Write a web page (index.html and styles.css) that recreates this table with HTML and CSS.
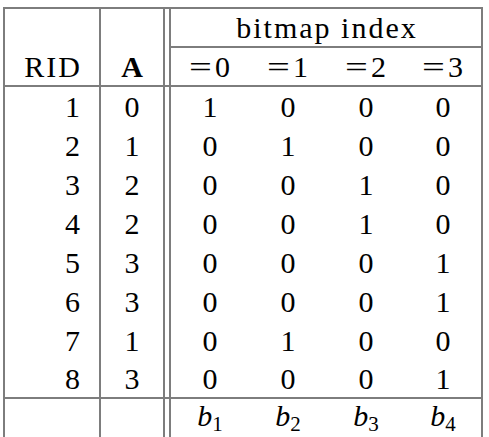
FILE: index.html
```html
<!DOCTYPE html>
<html>
<head>
    <meta charset="UTF-8">
    <title>bitmap index</title>
    <link rel="stylesheet" href="styles.css">
</head>
<body>
<table class="bitmap">
    <colgroup>
        <col class="c-rid"><col class="c-a"><col class="c-gap">
        <col class="c-bit"><col class="c-bit"><col class="c-bit"><col class="c-bit">
    </colgroup>
    <thead>
        <tr class="top">
            <th class="rid"></th><th class="a"></th><th class="gap"></th>
            <th class="cap last" colspan="4"><span class="wide">bitmap index</span></th>
        </tr>
        <tr class="head">
            <th class="rid"><span class="wide">RID</span></th><th class="a"><b>A</b></th><th class="gap"></th>
            <th><span class="eq">=</span>0</th><th><span class="eq">=</span>1</th><th><span class="eq">=</span>2</th><th class="last"><span class="eq">=</span>3</th>
        </tr>
    </thead>
    <tbody>
        <tr><td class="rid">1</td><td class="a">0</td><td class="gap"></td><td>1</td><td>0</td><td>0</td><td class="last">0</td></tr>
        <tr><td class="rid">2</td><td class="a">1</td><td class="gap"></td><td>0</td><td>1</td><td>0</td><td class="last">0</td></tr>
        <tr><td class="rid">3</td><td class="a">2</td><td class="gap"></td><td>0</td><td>0</td><td>1</td><td class="last">0</td></tr>
        <tr><td class="rid">4</td><td class="a">2</td><td class="gap"></td><td>0</td><td>0</td><td>1</td><td class="last">0</td></tr>
        <tr><td class="rid">5</td><td class="a">3</td><td class="gap"></td><td>0</td><td>0</td><td>0</td><td class="last">1</td></tr>
        <tr><td class="rid">6</td><td class="a">3</td><td class="gap"></td><td>0</td><td>0</td><td>0</td><td class="last">1</td></tr>
        <tr><td class="rid">7</td><td class="a">1</td><td class="gap"></td><td>0</td><td>1</td><td>0</td><td class="last">0</td></tr>
        <tr class="end"><td class="rid">8</td><td class="a">3</td><td class="gap"></td><td>0</td><td>0</td><td>0</td><td class="last">1</td></tr>
    </tbody>
    <tfoot>
        <tr class="foot">
            <td class="rid"></td><td class="a"></td><td class="gap"></td>
            <td><i>b</i><sub>1</sub></td><td><i>b</i><sub>2</sub></td><td><i>b</i><sub>3</sub></td><td class="last"><i>b</i><sub>4</sub></td>
        </tr>
    </tfoot>
</table>
</body>
</html>
```

FILE: styles.css
```css
*{margin:0;padding:0;}
body{font:30px/34px "Liberation Serif","Times New Roman",serif;color:#000;background:#fff;}
.bitmap{margin:7px 0 0 3px;border-collapse:separate;border-spacing:0;table-layout:fixed;width:480px;}
.c-rid{width:98px;}
.c-a{width:62px;}
.c-gap{width:8px;}
.c-bit{width:78px;}
.bitmap th,.bitmap td{font-weight:normal;text-align:center;vertical-align:middle;padding:0;white-space:nowrap;}
.bitmap b{font-weight:bold;}
.bitmap .rid{text-align:right;padding-right:19px;border-left:2px solid #7d7d7d;border-right:2px solid #7d7d7d;}
.bitmap .gap{border-left:2px solid #7d7d7d;border-right:2px solid #7d7d7d;}
.bitmap .last{border-right:2px solid #7d7d7d;}
.wide{letter-spacing:2px;margin-right:-2px;}
.eq{display:inline-block;transform:scaleX(1.35);margin:0 6px 0 2px;}
.top{height:41px;}
.top th{border-top:2px solid #7d7d7d;}
.top .cap{border-bottom:2px solid #7d7d7d;}
.head{height:39px;}
.head th{border-bottom:2px solid #7d7d7d;}
tbody tr{height:39px;}
.end td{border-bottom:2px solid #7d7d7d;}
.foot{height:38px;}
.foot td{line-height:30px;vertical-align:top;padding-top:2px;}
.foot i{font-style:italic;}
.foot sub{font-size:0.7em;line-height:0;vertical-align:-0.22em;}
```
